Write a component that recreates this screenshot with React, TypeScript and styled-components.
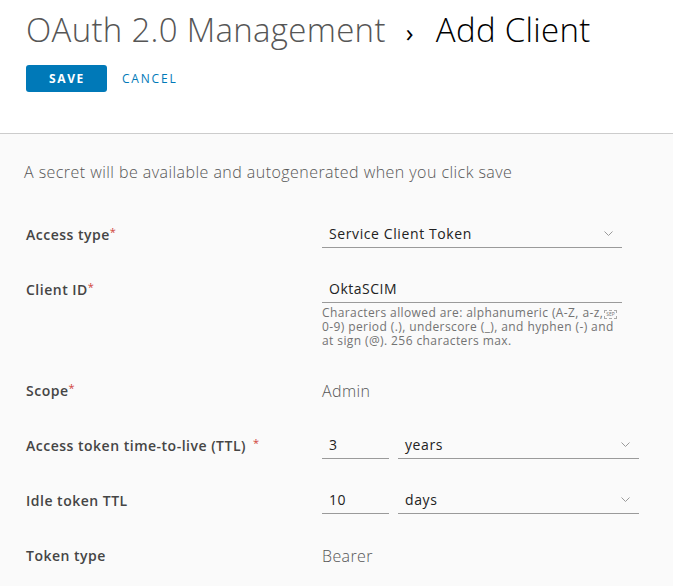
import React from "react"
import styled, { createGlobalStyle } from "styled-components"

const GlobalStyle = createGlobalStyle`
  html, body {
    margin: 0;
    padding: 0;
    background: #fafafa;
  }
  body {
    font-family: "Open Sans", Lato, sans-serif;
    color: #565656;
  }
`

const Chevron = () => (
  <svg width="9" height="5" viewBox="0 0 9 5">
    <path d="M0.5 0.5 L4.5 4.5 L8.5 0.5" fill="none" stroke="#9a9a9a" strokeWidth="1" />
  </svg>
)

const App = () => {
  return (
    <Page>
      <GlobalStyle />
      <Header>
        <Title>
          <Crumb>OAuth 2.0 Management</Crumb>
          <Sep>›</Sep>
          <Current>Add Client</Current>
        </Title>
        <Actions>
          <PrimaryButton>SAVE</PrimaryButton>
          <LinkButton>CANCEL</LinkButton>
        </Actions>
      </Header>
      <Body>
        <Intro>A secret will be available and autogenerated when you click save</Intro>
        <Form>
          <Row>
            <Label>Access type<Req>*</Req></Label>
            <Select width={300}>
              <span>Service Client Token</span>
              <Chevron />
            </Select>
          </Row>
          <Row>
            <Label>Client ID<Req>*</Req></Label>
            <Field>
              <Input width={300}>OktaSCIM</Input>
              <Help>
                Characters allowed are: alphanumeric (A-Z, a-z,<SepBox>SEP</SepBox>
                <br />
                0-9) period (.), underscore (_), and hyphen (-) and
                <br />
                at sign (@). 256 characters max.
              </Help>
            </Field>
          </Row>
          <Row>
            <Label>Scope<Req>*</Req></Label>
            <Value>Admin</Value>
          </Row>
          <Row>
            <Label>Access token time-to-live (TTL) <Req spaced>*</Req></Label>
            <Controls>
              <Input width={67}>3</Input>
              <Select width={241}>
                <span>years</span>
                <Chevron />
              </Select>
            </Controls>
          </Row>
          <Row>
            <Label>Idle token TTL</Label>
            <Controls>
              <Input width={67}>10</Input>
              <Select width={241}>
                <span>days</span>
                <Chevron />
              </Select>
            </Controls>
          </Row>
          <Row>
            <Label>Token type</Label>
            <Value>Bearer</Value>
          </Row>
        </Form>
      </Body>
    </Page>
  )
}

export default App

const Page = styled.div`
  min-height: 586px;
  background: #fafafa;
`

const Header = styled.div`
  background: #fff;
  padding: 8px 26px 0;
  box-sizing: border-box;
  height: 134px;
  border-bottom: 1px solid #cccccc;
`

const Title = styled.div`
  display: flex;
  align-items: baseline;
  height: 44px;
  font-size: 33px;
  font-weight: 300;
  line-height: 44px;
  letter-spacing: 0.3px;
`

const Crumb = styled.span`
  color: #565656;
`

const Sep = styled.span`
  color: #000;
  font-size: 26px;
  font-weight: 400;
  margin: 0 22px 0 20px;
`

const Current = styled.span`
  color: #000;
`

const Actions = styled.div`
  display: flex;
  align-items: center;
  gap: 15px;
  margin-top: 13px;
`

const PrimaryButton = styled.button`
  width: 81px;
  height: 27px;
  border: none;
  border-radius: 3px;
  background: #0079b8;
  color: #fff;
  font-family: inherit;
  font-size: 12px;
  font-weight: 700;
  letter-spacing: 1.6px;
  padding: 0 0 0 1px;
`

const LinkButton = styled.button`
  border: none;
  background: none;
  color: #0079b8;
  font-family: inherit;
  font-size: 12px;
  font-weight: 400;
  letter-spacing: 1.8px;
  padding: 0;
`

const Body = styled.div`
  padding: 28px 24px 0;
`

const Intro = styled.div`
  font-size: 16px;
  font-weight: 300;
  line-height: 20px;
  letter-spacing: 0.45px;
  color: #565656;
`

const Form = styled.div`
  display: flex;
  flex-direction: column;
  gap: 29px;
  margin-top: 40px;
  padding-left: 2px;
`

const Row = styled.div`
  display: flex;
  align-items: flex-start;
`

const Label = styled.div`
  width: 296px;
  height: 26px;
  flex-shrink: 0;
  font-size: 14px;
  font-weight: 600;
  line-height: 26px;
  letter-spacing: 0.5px;
  color: #454545;
`

const Req = styled.span<{ spaced?: boolean }>`
  color: #d0443a;
  font-size: 11px;
  font-weight: 400;
  line-height: 0;
  position: relative;
  top: -4px;
  margin-left: ${(p) => (p.spaced ? "3px" : "0")};
`

const Field = styled.div`
  display: flex;
  flex-direction: column;
`

const Controls = styled.div`
  display: flex;
  gap: 9px;
`

const Input = styled.div<{ width: number }>`
  width: ${(p) => p.width}px;
  height: 26px;
  box-sizing: border-box;
  border-bottom: 1px solid #9a9a9a;
  padding-left: 7px;
  font-size: 14px;
  line-height: 24px;
  letter-spacing: 0.5px;
  color: #222;
`

const Select = styled.div<{ width: number }>`
  width: ${(p) => p.width}px;
  height: 26px;
  box-sizing: border-box;
  border-bottom: 1px solid #9a9a9a;
  display: flex;
  align-items: center;
  justify-content: space-between;
  padding: 0 9px 2px 7px;
  font-size: 14px;
  letter-spacing: 0.6px;
  color: #222;
`

const Help = styled.div`
  margin-top: 3px;
  padding-bottom: 1px;
  height: 42px;
  font-size: 12px;
  line-height: 14px;
  letter-spacing: 0.4px;
  color: #737373;
  white-space: nowrap;
`

const SepBox = styled.span`
  display: inline-block;
  font-size: 5px;
  line-height: 5px;
  letter-spacing: 0;
  border: 1px dashed #aaa;
  padding: 1px;
  margin-left: 1px;
  vertical-align: 1px;
  color: #777;
`

const Value = styled.div`
  height: 26px;
  font-size: 16px;
  font-weight: 300;
  line-height: 26px;
  letter-spacing: 0.4px;
  color: #565656;
`
